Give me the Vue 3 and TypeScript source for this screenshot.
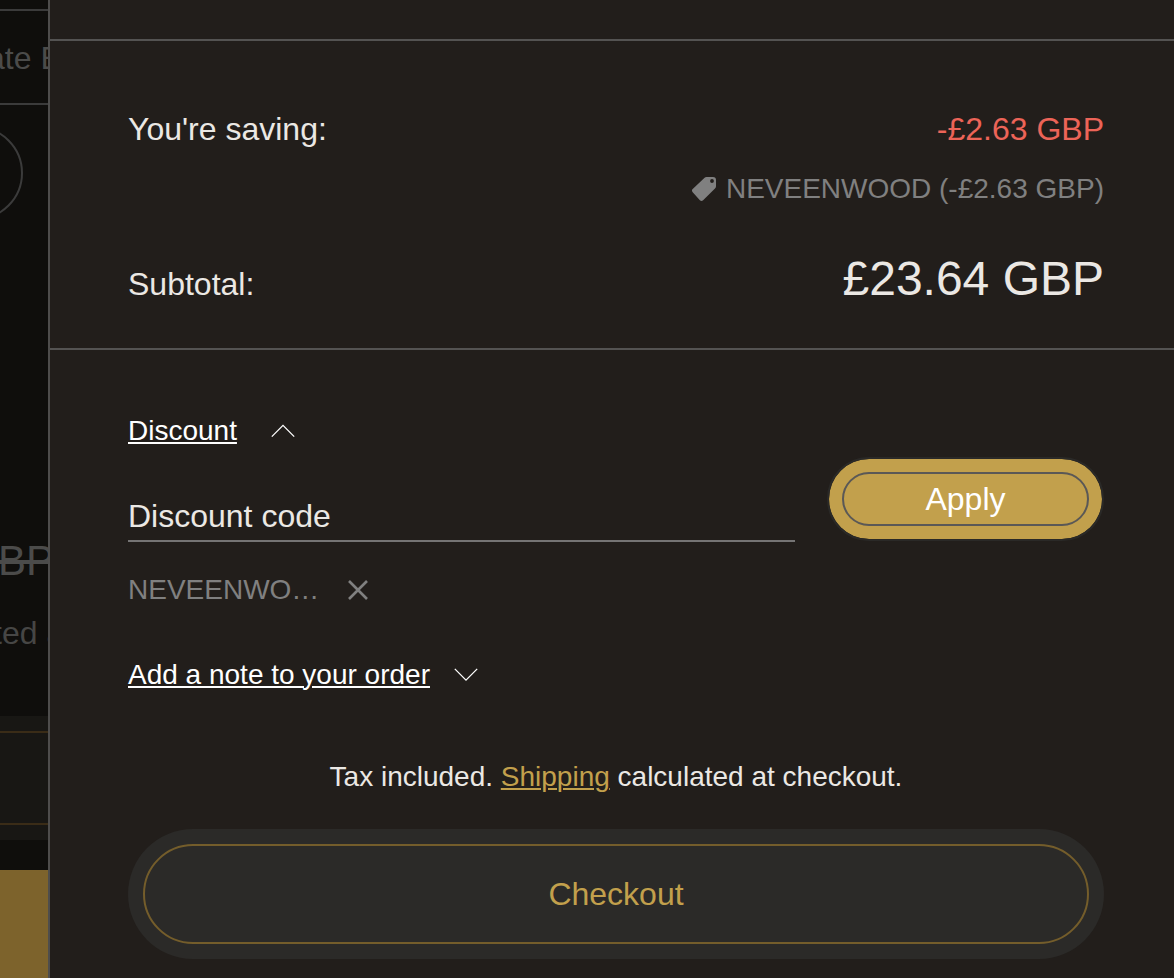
<script setup lang="ts">
import { ref } from 'vue'

const savings = '-£2.63 GBP'
const code = 'NEVEENWOOD'
const subtotal = '£23.64 GBP'
const discountOpen = ref(true)
const discountCode = ref('')
const applied = ref(true)
const noteOpen = ref(false)
</script>

<template>
  <div class="screen">
    <div class="page">
      <div class="page-row">ate E</div>
      <div class="ring"></div>
      <s class="old-price">BP</s>
      <div class="page-note">ted a</div>
      <div class="page-box"><div class="page-box-inner"></div></div>
      <div class="page-gold"></div>
    </div>

    <aside class="drawer">
      <section class="totals">
        <div class="line">
          <span>You're saving:</span>
          <span class="saving">{{ savings }}</span>
        </div>
        <div class="tag-line">
          <svg class="tag" viewBox="0 0 24 24" aria-hidden="true">
            <path
              fill="currentColor"
              fill-rule="evenodd"
              d="M12.6.8A3 3 0 0 1 14.8 0H21a3 3 0 0 1 3 3v6.2a3.2 3.2 0 0 1-1 2.3L11.1 23.2a2.3 2.3 0 0 1-3.2 0L.7 15.2a2.3 2.3 0 0 1 0-3.2zM20 2.1a1.9 1.9 0 1 0 0 3.8 1.9 1.9 0 0 0 0-3.8z"
            />
          </svg>
          <span>{{ code }} ({{ savings }})</span>
        </div>
        <div class="line subtotal">
          <span>Subtotal:</span>
          <span class="amount">{{ subtotal }}</span>
        </div>
      </section>

      <section class="actions">
        <form class="discount" @submit.prevent>
          <div class="discount-main">
            <button class="toggle wide" type="button" :aria-expanded="discountOpen" @click="discountOpen = !discountOpen">
              <span class="toggle-text">Discount</span>
              <svg class="chevron" viewBox="0 0 24 14" aria-hidden="true">
                <path d="M.8 12.6 12 1.4l11.2 11.2" fill="none" stroke="currentColor" stroke-width="1.3" />
              </svg>
            </button>
            <input v-model="discountCode" class="code" type="text" aria-label="Discount code" placeholder="Discount code" />
          </div>
          <button class="apply" type="submit"><span class="apply-inner">Apply</span></button>
        </form>

        <div v-if="applied" class="applied">
          <span>NEVEENWO…</span>
          <button class="remove" type="button" aria-label="Remove discount" @click="applied = false">
            <svg viewBox="0 0 20 20" aria-hidden="true">
              <path d="M1 1l18 18M19 1L1 19" fill="none" stroke="currentColor" stroke-width="2.6" />
            </svg>
          </button>
        </div>

        <button class="toggle note" type="button" :aria-expanded="noteOpen" @click="noteOpen = !noteOpen">
          <span class="toggle-text">Add a note to your order</span>
          <svg class="chevron" viewBox="0 0 24 14" aria-hidden="true">
            <path d="M.8 .9 12 12.1 23.2 .9" fill="none" stroke="currentColor" stroke-width="1.3" />
          </svg>
        </button>

        <p class="tax">Tax included. <a href="#shipping">Shipping</a> calculated at checkout.</p>

        <button class="checkout" type="button"><span class="checkout-inner">Checkout</span></button>
      </section>
    </aside>
  </div>
</template>

<style>
body {
  margin: 0;
  background: #221e1b;
}
</style>

<style scoped>
.screen {
  display: grid;
  grid-template-columns: 48px minmax(0, 1fr);
  min-height: 100vh;
  font-family: "Liberation Sans", Helvetica, Arial, sans-serif;
  font-size: 32px;
  line-height: 40px;
  color: #ebe8e4;
}
.page {
  display: flex;
  flex-direction: column;
  align-items: flex-start;
  overflow: hidden;
  white-space: nowrap;
  background: #0f0e0c;
  color: #4b4b4a;
}
.page-row {
  box-sizing: border-box;
  height: 96px;
  margin: 9px 0 0 -13px;
  padding: 27px 0;
  border: solid #3b3b3b;
  border-width: 2px 0;
}
.ring {
  box-sizing: border-box;
  width: 94px;
  height: 94px;
  margin: 21px 0 0 -71px;
  border: 2px solid #3b3b3b;
  border-radius: 50%;
}
.old-price {
  margin: 321px 0 0 -2px;
  font-size: 42px;
  text-decoration-thickness: 4px;
}
.page-note {
  margin: 32px 0 0 -7px;
  color: #464645;
}
.page-box {
  align-self: stretch;
  box-sizing: border-box;
  height: 124px;
  margin-top: 63px;
  padding: 15px 0;
  background: #181714;
}
.page-box-inner {
  box-sizing: border-box;
  height: 94px;
  border: solid #3a2c17;
  border-width: 2px 0;
}
.page-gold {
  align-self: stretch;
  flex: 1;
  margin-top: 30px;
  background: #7d632c;
}
.drawer {
  border-left: 2px solid #4e4d4c;
  background: #221e1b;
}
.totals {
  margin-top: 39px;
  padding: 68px 70px 41px 78px;
  border: solid #545352;
  border-width: 2px 0;
}
.line {
  display: flex;
  justify-content: space-between;
  align-items: baseline;
}
.saving {
  color: #ec6458;
}
.tag-line {
  display: flex;
  justify-content: flex-end;
  align-items: center;
  gap: 10px;
  margin-top: 20px;
  font-size: 28px;
  color: #808080;
}
.tag {
  width: 24px;
  height: 24px;
}
.subtotal {
  margin-top: 42px;
}
.amount {
  font-size: 48px;
  line-height: 56px;
}
.actions {
  padding: 61px 70px 19px 78px;
}
button {
  margin: 0;
  padding: 0;
  border: 0;
  background: none;
  font: inherit;
  color: inherit;
  cursor: pointer;
}
.discount {
  display: grid;
  grid-template-columns: minmax(0, 1fr) 277px;
  gap: 32px;
  align-items: end;
}
.toggle {
  display: flex;
  align-items: center;
  gap: 24px;
  font-size: 28px;
  color: #fff;
}
.wide {
  gap: 34px;
}
.toggle-text {
  text-decoration: underline;
  text-decoration-thickness: 2px;
  text-underline-offset: 2px;
}
.chevron {
  width: 24px;
  height: 14px;
}
.code {
  display: block;
  box-sizing: border-box;
  width: 100%;
  height: 50px;
  margin-top: 41px;
  padding: 0;
  border: 0;
  border-bottom: 2px solid #757474;
  border-radius: 0;
  outline: 0;
  background: none;
  font: inherit;
  color: inherit;
}
.code::placeholder {
  color: inherit;
  opacity: 1;
}
.apply {
  height: 84px;
  margin-bottom: 1px;
  padding: 13px;
  border: 2px solid #2a2927;
  border-radius: 42px;
  background: #c2a04c;
  background-clip: padding-box;
  color: #fff;
}
.apply-inner,
.checkout-inner {
  display: flex;
  align-items: center;
  justify-content: center;
  box-sizing: border-box;
  height: 100%;
  border: 2px solid #5a5856;
  border-radius: 50px;
}
.applied {
  display: flex;
  align-items: center;
  gap: 29px;
  margin-top: 28px;
  font-size: 28px;
  color: #808080;
}
.remove {
  display: flex;
  width: 20px;
  height: 20px;
}
.note {
  margin-top: 45px;
}
.tax {
  margin: 62px 0 32px;
  font-size: 28px;
  text-align: center;
}
.tax a {
  color: #c2a04c;
  text-decoration-thickness: 2px;
  text-underline-offset: 2px;
}
.checkout {
  display: block;
  width: 100%;
  height: 130px;
  padding: 15px;
  border-radius: 65px;
  background: #2b2a28;
  color: #c2a04c;
}
.checkout-inner {
  border-color: #745d2b;
}
</style>
